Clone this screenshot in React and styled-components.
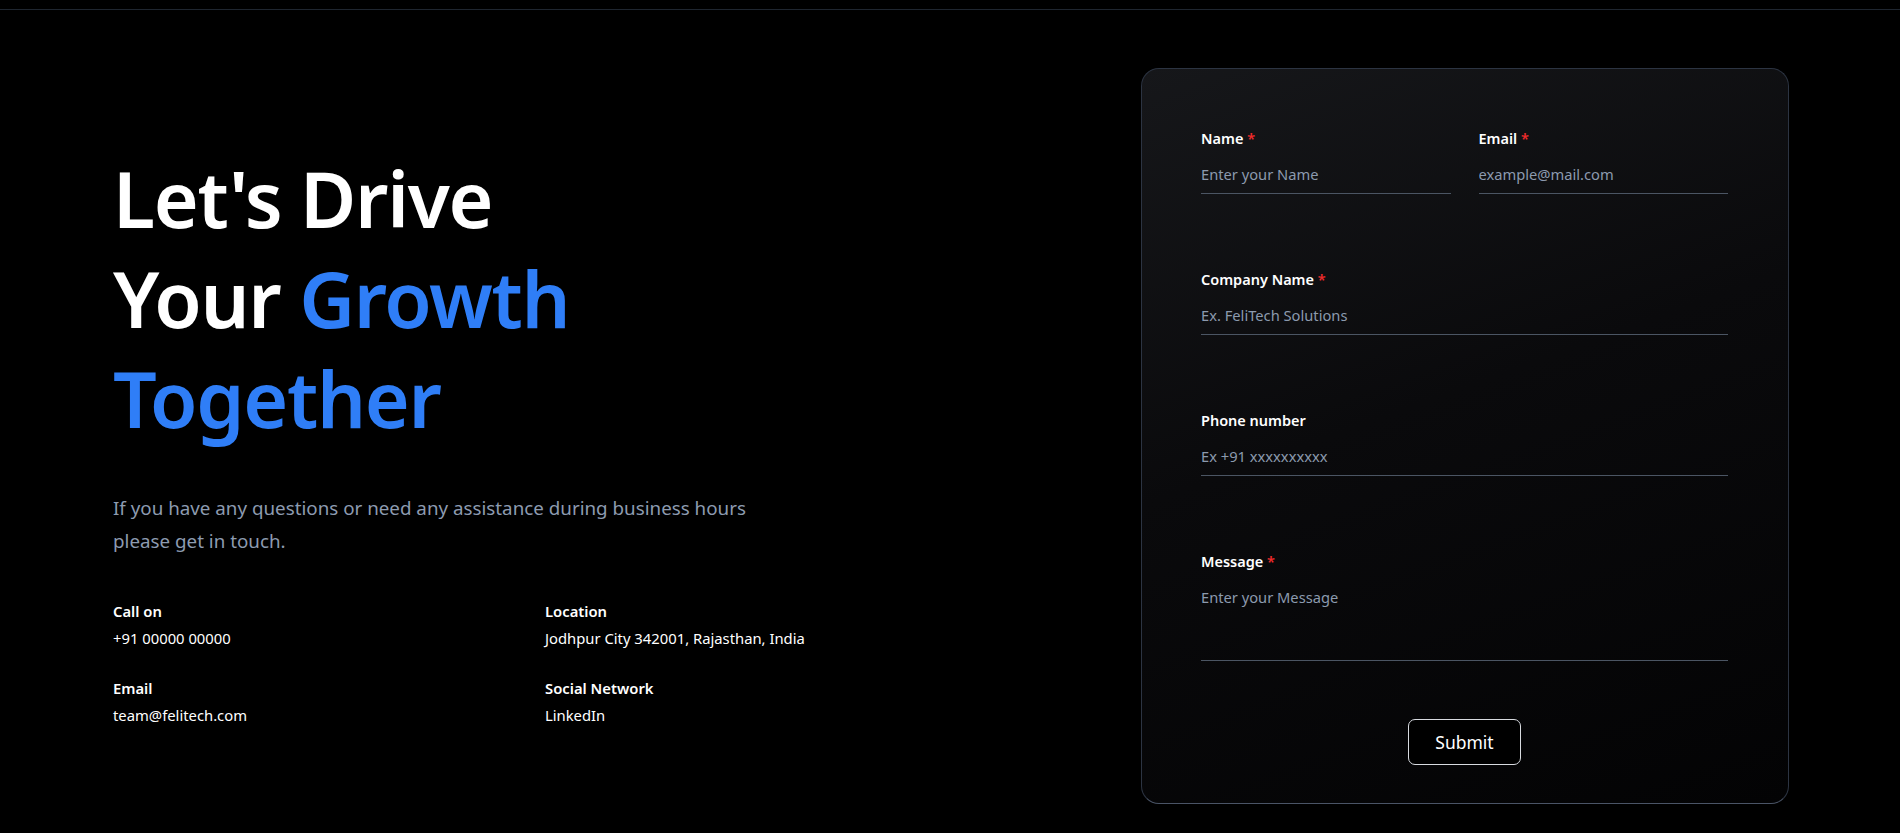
import React from "react";
import styled, { createGlobalStyle } from "styled-components";

const GlobalStyle = createGlobalStyle`
  html, body {
    margin: 0;
    padding: 0;
    background: #000;
  }
  body {
    font-family: "Noto Sans", "Open Sans", sans-serif;
    color: #fff;
  }
  * {
    box-sizing: border-box;
  }
`;

const App = () => {
  return (
    <>
      <GlobalStyle />
      <Page>
        <TopBar />
        <Section>
          <Intro>
            <Heading>
              Let's Drive
              <br />
              Your <Accent>Growth</Accent>
              <br />
              <Accent>Together</Accent>
            </Heading>
            <Lead>
              If you have any questions or need any assistance during business hours
              <br />
              please get in touch.
            </Lead>
            <InfoGrid>
              <InfoItem>
                <InfoLabel>Call on</InfoLabel>
                <InfoValue>+91 00000 00000</InfoValue>
              </InfoItem>
              <InfoItem>
                <InfoLabel>Location</InfoLabel>
                <InfoValue>Jodhpur City 342001, Rajasthan, India</InfoValue>
              </InfoItem>
              <InfoItem>
                <InfoLabel>Email</InfoLabel>
                <InfoValue>team@felitech.com</InfoValue>
              </InfoItem>
              <InfoItem>
                <InfoLabel>Social Network</InfoLabel>
                <InfoValue>LinkedIn</InfoValue>
              </InfoItem>
            </InfoGrid>
          </Intro>

          <Card onSubmit={(e) => e.preventDefault()}>
            <Row>
              <Field>
                <Label>
                  Name <Req>*</Req>
                </Label>
                <Input type="text" placeholder="Enter your Name" />
              </Field>
              <Field>
                <Label>
                  Email <Req>*</Req>
                </Label>
                <Input type="email" placeholder="example@mail.com" />
              </Field>
            </Row>
            <Field>
              <Label>
                Company Name <Req>*</Req>
              </Label>
              <Input type="text" placeholder="Ex. FeliTech Solutions" />
            </Field>
            <Field>
              <Label>Phone number</Label>
              <Input type="tel" placeholder="Ex +91 xxxxxxxxxx" />
            </Field>
            <Field>
              <Label>
                Message <Req>*</Req>
              </Label>
              <TextArea placeholder="Enter your Message" />
            </Field>
            <Actions>
              <Submit type="submit">Submit</Submit>
            </Actions>
          </Card>
        </Section>
      </Page>
    </>
  );
};

const Page = styled.div`
  min-height: 833px;
  background: #000;
`;

const TopBar = styled.div`
  height: 10px;
  border-bottom: 1px solid #1f2630;
`;

const Section = styled.section`
  display: flex;
  justify-content: space-between;
  align-items: flex-start;
  padding: 58px 111px 30px 113px;
`;

const Intro = styled.div`
  padding-top: 81px;
  width: 800px;
`;

const Heading = styled.h1`
  margin: 0;
  font-size: 77px;
  line-height: 100px;
  font-weight: 600;
  color: #fff;
  letter-spacing: -1.3px;
`;

const Accent = styled.span`
  color: #2f7ef7;
`;

const Lead = styled.p`
  margin: 43px 0 0;
  font-size: 18.8px;
  line-height: 33px;
  color: #8d9bb0;
`;

const InfoGrid = styled.div`
  display: grid;
  grid-template-columns: 432px 1fr;
  row-gap: 28px;
  margin-top: 42px;
`;

const InfoItem = styled.div`
  display: flex;
  flex-direction: column;
  gap: 5px;
`;

const InfoLabel = styled.span`
  font-size: 14.8px;
  line-height: 22px;
  font-weight: 600;
  color: #fff;
`;

const InfoValue = styled.span`
  font-size: 14.8px;
  line-height: 22px;
  color: #fff;
`;

const Card = styled.form`
  width: 648px;
  display: flex;
  flex-direction: column;
  gap: 75px;
  padding: 59px 60px 38px 59px;
  border: 1px solid #2c3442;
  border-bottom-color: #4a5466;
  border-radius: 18px;
  background: linear-gradient(160deg, #16171a 0%, #0a0a0c 45%, #030304 100%);
`;

const Row = styled.div`
  display: grid;
  grid-template-columns: 1fr 1fr;
  column-gap: 28px;
`;

const Field = styled.div`
  display: flex;
  flex-direction: column;
  gap: 8px;
`;

const Label = styled.label`
  font-size: 14.5px;
  line-height: 20px;
  font-weight: 600;
  color: #fff;
`;

const Req = styled.span`
  color: #ef2b2b;
`;

const fieldBase = `
  width: 100%;
  background: transparent;
  border: none;
  border-bottom: 1px solid #4b5563;
  outline: none;
  color: #fff;
  font-family: "Noto Sans", "Open Sans", sans-serif;
  font-size: 14.7px;
  line-height: 20px;
  &::placeholder {
    color: #8c9aae;
  }
`;

const Input = styled.input`
  ${fieldBase}
  height: 38px;
  padding: 8px 0 10px;
`;

const TextArea = styled.textarea`
  ${fieldBase}
  height: 82px;
  padding: 8px 0;
  resize: none;
`;

const Actions = styled.div`
  display: flex;
  justify-content: center;
  margin-top: -17px;
`;

const Submit = styled.button`
  width: 113px;
  height: 46px;
  background: #000;
  color: #fff;
  border: 1px solid #d8dbe0;
  border-radius: 7px;
  font-family: "Noto Sans", "Open Sans", sans-serif;
  font-size: 17.5px;
  cursor: pointer;
`;

export default App;
